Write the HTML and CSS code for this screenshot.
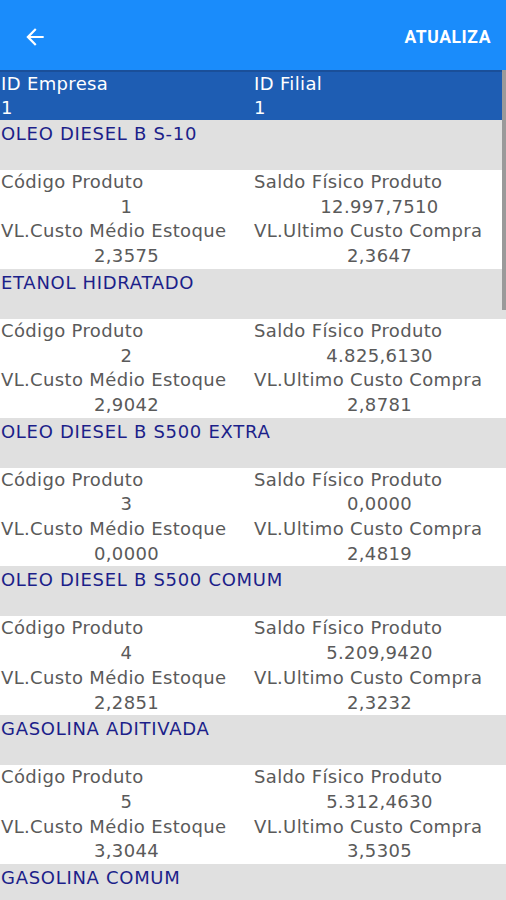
FILE: index.html
```html
<!DOCTYPE html>
<html lang="pt">
<head>
<meta charset="utf-8">
<link rel="stylesheet" href="styles.css">
</head>
<body>
<div class="appbar">
  <svg class="back" width="26" height="26" viewBox="0 0 24 24"><path d="M20 11H7.83l5.59-5.59L12 4l-8 8 8 8 1.41-1.41L7.83 13H20v-2z" fill="#fff"/></svg>
  <span class="action">ATUALIZA</span>
</div>
<div class="content">
  <div class="head">
    <div class="hcol"><div>ID Empresa</div><div>1</div></div>
    <div class="hcol"><div>ID Filial</div><div>1</div></div>
  </div>
  <div class="item">
    <div class="title">OLEO DIESEL B S-10</div>
    <div class="details">
      <div class="cell"><div class="lbl">Código Produto</div><div class="val">1</div></div>
      <div class="cell"><div class="lbl">Saldo Físico Produto</div><div class="val">12.997,7510</div></div>
      <div class="cell"><div class="lbl">VL.Custo Médio Estoque</div><div class="val">2,3575</div></div>
      <div class="cell"><div class="lbl">VL.Ultimo Custo Compra</div><div class="val">2,3647</div></div>
    </div>
  </div>
  <div class="item">
    <div class="title">ETANOL HIDRATADO</div>
    <div class="details">
      <div class="cell"><div class="lbl">Código Produto</div><div class="val">2</div></div>
      <div class="cell"><div class="lbl">Saldo Físico Produto</div><div class="val">4.825,6130</div></div>
      <div class="cell"><div class="lbl">VL.Custo Médio Estoque</div><div class="val">2,9042</div></div>
      <div class="cell"><div class="lbl">VL.Ultimo Custo Compra</div><div class="val">2,8781</div></div>
    </div>
  </div>
  <div class="item">
    <div class="title">OLEO DIESEL B S500 EXTRA</div>
    <div class="details">
      <div class="cell"><div class="lbl">Código Produto</div><div class="val">3</div></div>
      <div class="cell"><div class="lbl">Saldo Físico Produto</div><div class="val">0,0000</div></div>
      <div class="cell"><div class="lbl">VL.Custo Médio Estoque</div><div class="val">0,0000</div></div>
      <div class="cell"><div class="lbl">VL.Ultimo Custo Compra</div><div class="val">2,4819</div></div>
    </div>
  </div>
  <div class="item">
    <div class="title">OLEO DIESEL B S500 COMUM</div>
    <div class="details">
      <div class="cell"><div class="lbl">Código Produto</div><div class="val">4</div></div>
      <div class="cell"><div class="lbl">Saldo Físico Produto</div><div class="val">5.209,9420</div></div>
      <div class="cell"><div class="lbl">VL.Custo Médio Estoque</div><div class="val">2,2851</div></div>
      <div class="cell"><div class="lbl">VL.Ultimo Custo Compra</div><div class="val">2,3232</div></div>
    </div>
  </div>
  <div class="item">
    <div class="title">GASOLINA ADITIVADA</div>
    <div class="details">
      <div class="cell"><div class="lbl">Código Produto</div><div class="val">5</div></div>
      <div class="cell"><div class="lbl">Saldo Físico Produto</div><div class="val">5.312,4630</div></div>
      <div class="cell"><div class="lbl">VL.Custo Médio Estoque</div><div class="val">3,3044</div></div>
      <div class="cell"><div class="lbl">VL.Ultimo Custo Compra</div><div class="val">3,5305</div></div>
    </div>
  </div>
  <div class="item">
    <div class="title">GASOLINA COMUM</div>
  </div>
  <div class="scrollbar"></div>
</div>
</body>
</html>
```
FILE: styles.css
```css
html, body {
  margin: 0;
  padding: 0;
  width: 506px;
  height: 900px;
  overflow: hidden;
  background: #fff;
  font-family: "DejaVu Sans", sans-serif;
}
.appbar {
  height: 70px;
  background: #1a8cfb;
  display: flex;
  align-items: center;
  justify-content: space-between;
  padding: 4px 15px 0 22px;
  box-sizing: border-box;
}
.back { display: block; }
.action {
  color: #fff;
  font-family: "Roboto", sans-serif;
  font-weight: 700;
  font-size: 17.5px;
  letter-spacing: 0.6px;
}
.content {
  position: relative;
}
.head {
  height: 50px;
  background: #1e5db3;
  border-top: 2px solid #1a4f99;
  box-sizing: border-box;
  display: grid;
  grid-template-columns: 253px 253px;
  color: #fff;
  font-size: 18px;
  letter-spacing: 0.35px;
  line-height: 24px;
}
.hcol { padding-left: 1px; }
.title {
  height: 50px;
  background: #e0e0e0;
  color: #1c1f8a;
  font-size: 18px;
  letter-spacing: 0.7px;
  line-height: 27px;
  padding-left: 1px;
  box-sizing: border-box;
  white-space: nowrap;
}
.details {
  height: 98.8px;
  display: grid;
  grid-template-columns: 253px 253px;
  font-size: 18px;
  letter-spacing: 0.35px;
  line-height: 24.7px;
  color: #5a5a5a;
}
.lbl { padding-left: 1px; white-space: nowrap; }
.val { text-align: center; }
.scrollbar {
  position: absolute;
  right: 0;
  top: 0;
  width: 4px;
  height: 240px;
  background: #9a9a9a;
}
```
